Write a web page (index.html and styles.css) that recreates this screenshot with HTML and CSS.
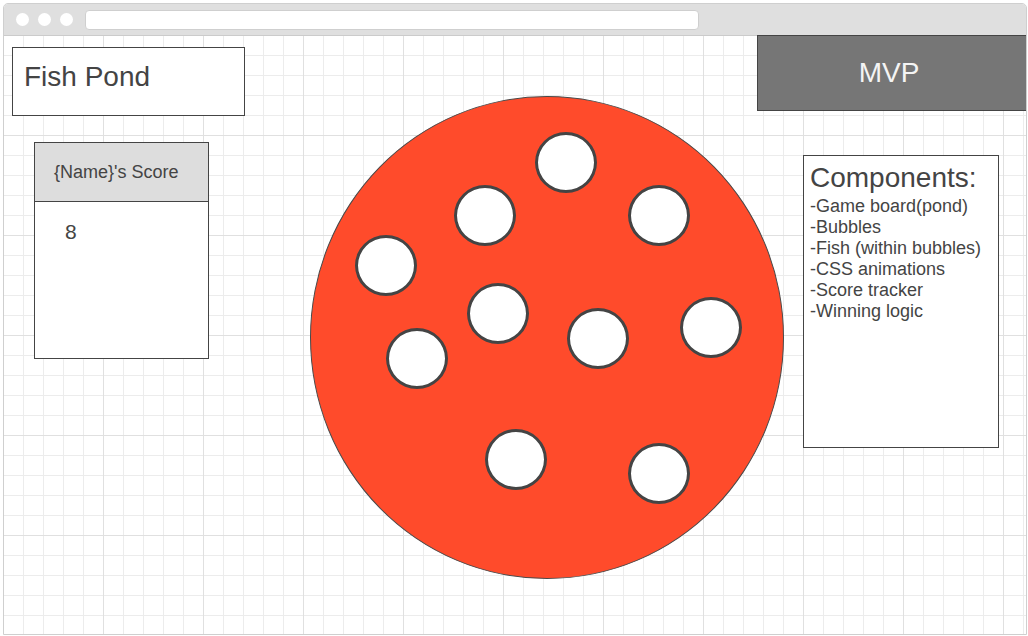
FILE: index.html
```html
<!DOCTYPE html>
<html lang="en">
<head>
<meta charset="utf-8">
<title>Fish Pond wireframe</title>
<link rel="stylesheet" href="styles.css">
</head>
<body>
<div class="window">
  <div class="titlebar">
    <div class="dots">
      <span class="dot"></span><span class="dot"></span><span class="dot"></span>
    </div>
    <div class="urlbar"></div>
  </div>
  <div class="canvas">
    <div class="left-col">
      <div class="title-box">Fish Pond</div>
      <div class="score-box">
        <div class="score-head">{Name}'s Score</div>
        <div class="score-body">8</div>
      </div>
    </div>
    <div class="pond">
      <span class="bubble" style="left:224px;top:35px"></span>
      <span class="bubble" style="left:143px;top:88px"></span>
      <span class="bubble" style="left:317px;top:88px"></span>
      <span class="bubble" style="left:44px;top:138px"></span>
      <span class="bubble" style="left:156px;top:186px"></span>
      <span class="bubble" style="left:256px;top:211px"></span>
      <span class="bubble" style="left:369px;top:200px"></span>
      <span class="bubble" style="left:75px;top:231px"></span>
      <span class="bubble" style="left:174px;top:332px"></span>
      <span class="bubble" style="left:317px;top:346px"></span>
    </div>
    <div class="right-col">
      <div class="mvp">MVP</div>
      <div class="components">
        <div class="comp-title">Components:</div>
        <ul class="comp-list">
          <li>-Game board(pond)</li>
          <li>-Bubbles</li>
          <li>-Fish (within bubbles)</li>
          <li>-CSS animations</li>
          <li>-Score tracker</li>
          <li>-Winning logic</li>
        </ul>
      </div>
    </div>
  </div>
</div>
</body>
</html>
```
FILE: styles.css
```css
* { box-sizing: border-box; }
html, body { margin: 0; padding: 0; background: #fff; }
body {
  font-family: "Liberation Sans", Arial, sans-serif;
  color: #444;
  width: 1028px;
  height: 636px;
  overflow: hidden;
}
.window {
  margin: 3px 0 0 3px;
  width: 1024px;
  height: 632px;
  border: 1px solid #cfcfcf;
  border-radius: 5px 5px 0 0;
  display: flex;
  flex-direction: column;
  overflow: hidden;
}
.titlebar {
  height: 32px;
  flex: 0 0 32px;
  background: #dfdfdf;
  border-bottom: 1px solid #cbcbcb;
  display: flex;
  align-items: center;
  padding-left: 12px;
}
.dots { display: flex; gap: 9px; }
.dot {
  width: 13px;
  height: 13px;
  border-radius: 50%;
  background: #fff;
  display: block;
}
.urlbar {
  margin-left: 12px;
  width: 614px;
  height: 20px;
  background: #fff;
  border: 1px solid #cfcfcf;
  border-radius: 4px;
}
.canvas {
  flex: 1;
  display: flex;
  align-items: flex-start;
  background-color: #fff;
  background-image:
    linear-gradient(to right, #e0e0e0 1px, transparent 1px),
    linear-gradient(to bottom, #e0e0e0 1px, transparent 1px),
    linear-gradient(to right, #ececec 1px, transparent 1px),
    linear-gradient(to bottom, #ececec 1px, transparent 1px);
  background-size: 100px 100px, 100px 100px, 20px 20px, 20px 20px;
  background-position: 99px 0, 0 99px, 19px 0, 0 19px;
}
.left-col {
  margin-left: 8px;
  margin-top: 11px;
  width: 233px;
  flex: 0 0 233px;
  display: flex;
  flex-direction: column;
}
.title-box {
  height: 69px;
  border: 1px solid #444;
  background: #fff;
  font-size: 28px;
  padding: 13px 0 0 11px;
  line-height: normal;
}
.score-box {
  margin-top: 26px;
  margin-left: 22px;
  width: 175px;
  height: 217px;
  border: 1px solid #444;
  background: #fff;
  display: flex;
  flex-direction: column;
}
.score-head {
  height: 59px;
  background: #dddddd;
  border-bottom: 1px solid #444;
  display: flex;
  align-items: center;
  padding-left: 19px;
  font-size: 18px;
}
.score-body {
  padding: 18px 0 0 30px;
  font-size: 21px;
}
.pond {
  position: relative;
  flex: 0 0 474px;
  width: 474px;
  height: 483px;
  margin-left: 65px;
  margin-top: 60px;
  border-radius: 50%;
  background: #ff4b2b;
  border: 1px solid #4a4a4a;
}
.bubble {
  position: absolute;
  width: 62px;
  height: 61px;
  border-radius: 50%;
  background: #fff;
  border: 3.5px solid #444;
}
.right-col {
  flex: 0 0 270px;
  width: 270px;
  margin-left: -27px;
  margin-top: -1px;
  display: flex;
  flex-direction: column;
}
.mvp {
  height: 76px;
  background: #767676;
  border: 1px solid #444;
  color: #f4f4f4;
  font-size: 28px;
  display: flex;
  align-items: center;
  justify-content: center;
  padding-right: 6px;
}
.components {
  margin-top: 44px;
  margin-left: 46px;
  width: 196px;
  height: 293px;
  border: 1px solid #444;
  background: #fff;
  padding: 6px 0 0 6px;
}
.comp-title {
  font-size: 28px;
  line-height: 32px;
}
.comp-list {
  list-style: none;
  margin: 2px 0 0 0;
  padding: 0;
  font-size: 18px;
  line-height: 21px;
}
```
